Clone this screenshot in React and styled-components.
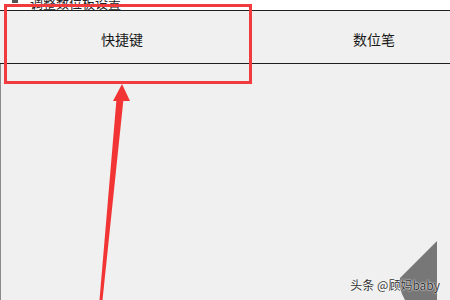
import React from 'react';
import styled, { createGlobalStyle } from 'styled-components';

const Global = createGlobalStyle`
  html, body { margin: 0; padding: 0; background: #f0f0f0; }
  body { font-family: "Noto Sans CJK SC", "Liberation Sans", sans-serif; }
`;

const Page = styled.div`
  position: relative;
  width: 450px;
  height: 300px;
  overflow: hidden;
  display: flex;
  flex-direction: column;
  background: #f0f0f0;
`;

const TitleStrip = styled.div`
  height: 10px;
  background: #fff;
  display: flex;
  align-items: flex-end;
  overflow: hidden;
  padding-left: 12px;
  gap: 12px;
`;

const TitleIcon = styled.span`
  width: 6px;
  height: 14px;
  background: #555;
  flex-shrink: 0;
  margin-bottom: 7px;
`;

const TitleText = styled.span`
  font-size: 13px;
  line-height: 13px;
  color: #222;
  margin-bottom: 1px;
  white-space: nowrap;
`;

const TabRow = styled.div`
  display: grid;
  grid-template-columns: 244px 260px;
  height: 52px;
  border-top: 1px solid #1e1e1e;
  border-bottom: 1px solid #1e1e1e;
  background: #f0f0f0;
`;

const Tab = styled.div`
  display: flex;
  align-items: center;
  justify-content: center;
  font-size: 14px;
  color: #1a1a1a;
  padding-top: 4px;
`;

const Body = styled.div`
  flex: 1;
  border-left: 1px solid #8a8a8a;
`;

const Highlight = styled.div`
  position: absolute;
  left: 4px;
  top: 4px;
  width: 248px;
  height: 80px;
  box-sizing: border-box;
  border: 3px solid #f03c3c;
`;

const Overlay = styled.svg`
  position: absolute;
  left: 0;
  top: 0;
  pointer-events: none;
`;

const Watermark = styled.div`
  position: absolute;
  right: 10px;
  bottom: 7px;
  font-size: 12px;
  color: #333;
  text-shadow: 0 0 2px #fff, 0 0 1px #fff;
  white-space: nowrap;
`;

export default function App() {
  return (
    <>
      <Global />
      <Page>
        <TitleStrip>
          <TitleIcon />
          <TitleText>调整数位板设置</TitleText>
        </TitleStrip>
        <TabRow>
          <Tab>快捷键</Tab>
          <Tab>数位笔</Tab>
        </TabRow>
        <Body />
        <Highlight />
        <Overlay width="450" height="300" viewBox="0 0 450 300">
          <path d="M437 241 L437 300 L405 300 Q398 288 400 278 Z" fill="#777" />
          <polygon points="99.5,300 102.5,300 123.5,99 116.5,99" fill="#f23434" />
          <polygon points="122,84 113,101 130,101" fill="#f23434" />
        </Overlay>
        <Watermark>头条 @顾妈baby</Watermark>
      </Page>
    </>
  );
}
